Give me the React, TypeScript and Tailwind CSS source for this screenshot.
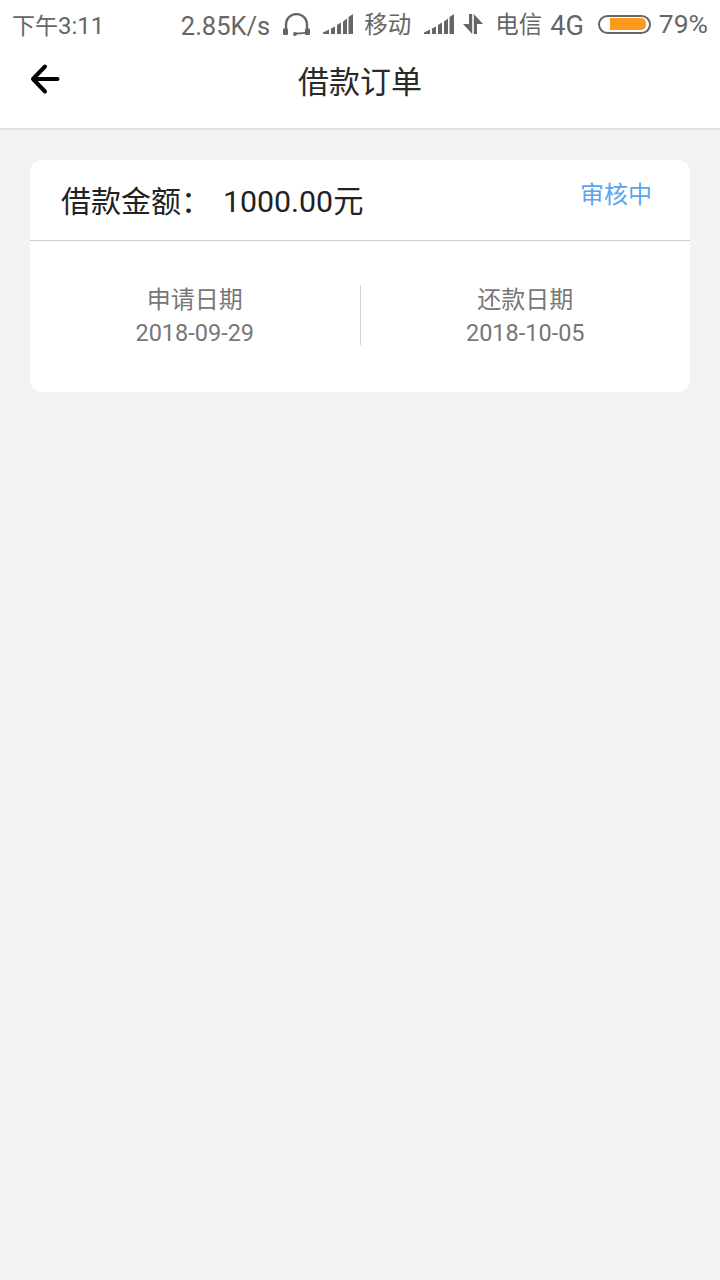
import React from 'react';

const font = { fontFamily: 'Roboto, "Noto Sans CJK SC", sans-serif' };

const Signal = () => (
  <svg className="mb-[4px]" width="30" height="20" viewBox="0 0 30 20" fill="#666">
    <path d="M0 20 V18.5 L6 15.5 V20 Z" />
    <path d="M8 20 V14.5 L12 12.5 V20 Z" />
    <path d="M14 20 V11 L18 8.5 V20 Z" />
    <path d="M20 20 V7.5 L24 4.5 V20 Z" />
    <path d="M25.5 20 V3 L30 0 V20 Z" />
  </svg>
);

const DateCol = ({ label, value }: { label: string; value: string }) => (
  <div className="flex-1 flex flex-col items-center text-[#777] leading-[33px]">
    <div className="text-[24px]">{label}</div>
    <div className="text-[23.5px]">{value}</div>
  </div>
);

export default function App() {
  return (
    <div className="w-[720px] h-[1280px] bg-[#f2f2f2] flex flex-col" style={font}>
      <div className="h-[130px] bg-white border-b-2 border-[#e0e0e0] shrink-0">
        {/* status bar */}
        <div className="h-[50px] pt-[2px] flex items-center justify-between px-[12px] text-[#666] text-[23.5px]">
          <span><span className="text-[23px]">下午</span><span className="text-[24px]">3:11</span></span>
          <div className="flex items-center">
            <span className="text-[25.5px]">2.85K/s</span>
            <svg className="ml-[13px] mb-[4px]" width="27" height="23" viewBox="0 0 27 23" fill="none" stroke="#666" strokeWidth="2.4">
              <path d="M3 16 V12 C3 -2.5 24 -2.5 24 12 V16" />
              <path d="M24 18 C24 20 20 20.5 12 20.5" strokeWidth="2" />
              <rect x="0" y="15.5" width="5" height="6.5" rx="1" fill="#666" stroke="none" />
              <rect x="22" y="15.5" width="5" height="6.5" rx="1" fill="#666" stroke="none" />
              <circle cx="12" cy="21" r="2" fill="#666" stroke="none" />
            </svg>
            <span className="ml-[13px] flex"><Signal /></span>
            <span className="ml-[11px]">移动</span>
            <span className="ml-[13px] flex"><Signal /></span>
            <svg className="ml-[9px] mb-[4px]" width="20" height="20" viewBox="0 0 20 20" fill="#666">
              <path d="M6 0 H9.2 V20 L0 10 H6 Z" />
              <path d="M10.8 20 V0 L20 10 H14 V20 Z" />
            </svg>
            <span className="ml-[12px]">电信</span>
            <span className="ml-[8px] text-[27px]">4G</span>
            <span className="ml-[14px] mb-[4px] w-[53px] h-[19px] rounded-full border-2 border-[#666] flex items-center pl-[10px] pr-[3px]">
              <span className="w-full h-[12px] bg-[#fb9a1c] rounded-r-[5px]" />
            </span>
            <span className="ml-[8px] mb-[4px] text-[26.5px]">79%</span>
          </div>
        </div>
        {/* title bar */}
        <div className="h-[64px] flex items-center pl-[28px] relative">
          <svg className="mb-[6px]" width="34" height="34" viewBox="0 0 34 34" fill="none" stroke="#000" strokeWidth="4" strokeLinecap="round" strokeLinejoin="round">
            <path d="M29.5 17 H5 M17 4.5 L5 17 L17 29.5" />
          </svg>
          <div className="absolute inset-0 pt-[2px] flex items-center justify-center text-[#2a2a2a] text-[31px]">借款订单</div>
        </div>
      </div>

      <div className="mt-[30px] mx-[30px] h-[232px] rounded-[12px] bg-white flex flex-col">
        <div className="h-[81px] border-b border-[#cfcfcf] flex justify-between pl-[31px] pr-[38px] shrink-0">
          <div className="text-[#222] text-[30px] leading-[84px] flex">
            <span>借款金额：</span>
            <span className="ml-[12px] text-[30.3px]">1000.00元</span>
          </div>
          <div className="text-[#5aa5ee] text-[24px] leading-[70px]">审核中</div>
        </div>
        <div className="flex items-start pt-[43px]">
          <DateCol label="申请日期" value="2018-09-29" />
          <div className="w-px h-[60px] mt-[1px] bg-[#d5d5d5]" />
          <DateCol label="还款日期" value="2018-10-05" />
        </div>
      </div>
    </div>
  );
}
